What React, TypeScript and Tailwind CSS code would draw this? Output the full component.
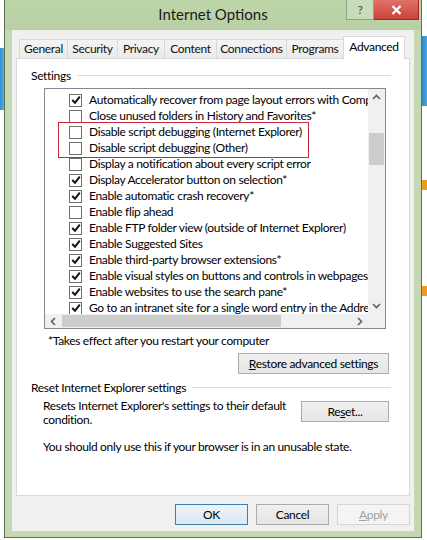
import { Fragment } from 'react';

const settings = [
  { label: 'Automatically recover from page layout errors with Compatibility View', checked: true },
  { label: 'Close unused folders in History and Favorites*', checked: false },
  { label: 'Disable script debugging (Internet Explorer)', checked: false },
  { label: 'Disable script debugging (Other)', checked: false },
  { label: 'Display a notification about every script error', checked: false },
  { label: 'Display Accelerator button on selection*', checked: true },
  { label: 'Enable automatic crash recovery*', checked: true },
  { label: 'Enable flip ahead', checked: false },
  { label: 'Enable FTP folder view (outside of Internet Explorer)', checked: true },
  { label: 'Enable Suggested Sites', checked: true },
  { label: 'Enable third-party browser extensions*', checked: true },
  { label: 'Enable visual styles on buttons and controls in webpages', checked: true },
  { label: 'Enable websites to use the search pane*', checked: true },
  { label: 'Go to an intranet site for a single word entry in the Address bar', checked: true },
];

const tabs = [
  { label: 'General', w: 'w-[48px]' },
  { label: 'Security', w: 'w-[50px]' },
  { label: 'Privacy', w: 'w-[47px]' },
  { label: 'Content', w: 'w-[52px]' },
  { label: 'Connections', w: 'w-[70px]' },
  { label: 'Programs', w: 'w-[57px]' },
];

function CheckBox({ checked }: { checked: boolean }) {
  return (
    <div className="w-[13px] h-[13px] border border-[#707070] bg-white flex items-center justify-center flex-shrink-0">
      {checked && (
        <svg width="10" height="10" viewBox="0 0 10 10">
          <path d="M1.2 5 L4 7.8 L8.8 1.6" fill="none" stroke="#111" strokeWidth="2" />
        </svg>
      )}
    </div>
  );
}

function Chevron({ dir }: { dir: 'up' | 'down' | 'left' | 'right' }) {
  const d = {
    up: 'M1 6 L4.5 2.5 L8 6',
    down: 'M1 3 L4.5 6.5 L8 3',
    left: 'M6 1 L2.5 4.5 L6 8',
    right: 'M3 1 L6.5 4.5 L3 8',
  }[dir];
  return (
    <svg width="9" height="9" viewBox="0 0 9 9">
      <path d={d} fill="none" stroke="#606060" strokeWidth="1.6" />
    </svg>
  );
}

function WinButton({
  children,
  className = '',
  variant = 'normal',
}: {
  children: React.ReactNode;
  className?: string;
  variant?: 'normal' | 'default' | 'disabled';
}) {
  const look =
    variant === 'default'
      ? 'border-[#3c7fb1] bg-[linear-gradient(#ecf4fb,#dde8f2)] text-black'
      : variant === 'disabled'
        ? 'border-[#d5d5d5] bg-[#f4f4f4] text-[#a0a0a0]'
        : 'border-[#acacac] bg-[linear-gradient(#f0f0f0,#e5e5e5)] text-black';
  return (
    <div className={`h-[21px] border flex items-center justify-center text-[12px] ${look} ${className}`}>
      {children}
    </div>
  );
}

export default function App() {
  return (
    <div className="w-[427px] h-[540px] bg-white flex overflow-hidden font-['Lato',sans-serif] text-[12px] tracking-[-0.33px] text-black leading-[16px]">
      {/* page behind the dialog */}
      <div className="w-[4px] flex flex-col flex-shrink-0">
        <div className="h-[48px]" />
        <div className="h-[62px] bg-[linear-gradient(90deg,#2d8fd0,#53b0e6)]" />
      </div>

      {/* dialog window */}
      <div className="w-[418px] h-[538px] flex flex-col flex-shrink-0 border-x border-b border-[#5f7155] bg-[#c4d9b3]">
        {/* title bar */}
        <div className="h-[30px] relative flex items-center justify-center bg-[linear-gradient(#bed5aa,#b8d0a3)]">
          <span className="text-[15px] tracking-normal text-[#1a1a1a] -mt-[2px]">Internet Options</span>
          <div className="absolute top-0 right-[2px] flex">
            <div className="w-[28px] h-[20px] border border-t-0 border-[#8ea581] bg-[#c9dcba] flex items-center justify-center text-[12px] text-[#3d4a36]">
              ?
            </div>
            <div className="w-[45px] h-[20px] border border-t-0 border-l-0 border-[#9b2a22] bg-[linear-gradient(#e0726a,#c8433a)] flex items-center justify-center">
              <svg width="11" height="10" viewBox="0 0 11 10">
                <path d="M1.5 1 L9.5 9 M9.5 1 L1.5 9" stroke="#fff" strokeWidth="2.4" />
              </svg>
            </div>
          </div>
        </div>

        {/* client area */}
        <div className="flex-1 px-[7px] pb-[6px]">
          <div className="h-full bg-[#f0f0f0] flex flex-col px-[4px] pt-[6px]">
            {/* tabs */}
            <div className="h-[22px] flex items-end pl-[3px]">
              {tabs.map((t) => (
                <div
                  key={t.label}
                  className={`${t.w} h-[19px] border border-b-0 border-r-0 border-[#d9d9d9] bg-[linear-gradient(#f3f3f3,#ebebeb)] flex items-center justify-center text-[12px] text-[#111]`}
                >
                  {t.label}
                </div>
              ))}
              <div className="w-[62px] h-[23px] -mb-[1px] border border-b-0 border-[#d9d9d9] bg-white flex justify-center pt-[2px] relative z-10">
                Advanced
              </div>
            </div>

            {/* tab panel */}
            <div className="h-[438px] bg-white border border-[#d9d9d9] flex flex-col">
              <div className="mt-[9px] flex items-center pl-[14px] pr-[18px]">
                <span>Settings</span>
                <div className="flex-1 ml-[6px] h-[2px] border-t border-[#d5dfe5] border-b border-b-white" />
              </div>

              {/* settings list */}
              <div className="ml-[27px] mt-[4px] w-[342px] h-[241px] border border-[#828790] flex flex-col relative">
                <div className="flex flex-1 min-h-0">
                  <div className="flex-1 overflow-hidden pt-[3px]">
                    {settings.map((s) => (
                      <div key={s.label} className="h-[16px] flex items-center pl-[24px] whitespace-nowrap">
                        <CheckBox checked={s.checked} />
                        <span className="ml-[7px]">{s.label}</span>
                      </div>
                    ))}
                  </div>
                  <div className="w-[17px] bg-[#f0f0f0] flex flex-col items-center">
                    <div className="h-[17px] flex items-center justify-center">
                      <Chevron dir="up" />
                    </div>
                    <div className="flex-1 w-full px-[1px] pt-[27px]">
                      <div className="h-[32px] bg-[#cdcdcd]" />
                    </div>
                    <div className="h-[17px] flex items-center justify-center">
                      <Chevron dir="down" />
                    </div>
                  </div>
                </div>
                <div className="h-[14px] flex bg-[#f0f0f0]">
                  <div className="w-[17px] flex items-center justify-center">
                    <Chevron dir="left" />
                  </div>
                  <div className="flex-1 flex py-[1px]">
                    <div className="w-[219px] bg-[#cdcdcd]" />
                  </div>
                  <div className="w-[17px] flex items-center justify-center">
                    <Chevron dir="right" />
                  </div>
                  <div className="w-[17px] bg-[#f0f0f0]" />
                </div>
                {/* red annotation box */}
                <div className="absolute left-[13px] top-[33px] w-[251px] h-[36px] border border-[#c8283c] pointer-events-none" />
              </div>

              <div className="ml-[31px] mt-[4px]">*Takes effect after you restart your computer</div>

              <div className="flex justify-end pr-[20px] mt-[4px]">
                <WinButton className="w-[151px]">
                  <span>
                    <span className="underline">R</span>estore advanced settings
                  </span>
                </WinButton>
              </div>

              <div className="mt-[6px] flex items-center pl-[14px] pr-[18px]">
                <span>Reset Internet Explorer settings</span>
                <div className="flex-1 ml-[6px] h-[2px] border-t border-[#d5dfe5] border-b border-b-white" />
              </div>

              <div className="mt-[3px] flex pl-[26px] pr-[20px]">
                <div className="flex-1 leading-[14px] whitespace-nowrap">
                  Resets Internet Explorer's settings to their default
                  <br />
                  condition.
                </div>
                <WinButton className="w-[88px] h-[20px] mt-[2px]">
                  <span>
                    Re<span className="underline">s</span>et...
                  </span>
                </WinButton>
              </div>

              <div className="ml-[26px] mt-[12px]">You should only use this if your browser is in an unusable state.</div>
            </div>

            {/* dialog buttons */}
            <div className="mt-[8px] flex justify-end gap-[8px]">
              <WinButton className="w-[73px]" variant="default">
                OK
              </WinButton>
              <WinButton className="w-[73px]">Cancel</WinButton>
              <WinButton className="w-[73px]" variant="disabled">
                <Fragment>
                  <span className="underline">A</span>pply
                </Fragment>
              </WinButton>
            </div>
          </div>
        </div>
      </div>

      {/* page behind the dialog, right side */}
      <div className="w-[5px] flex flex-col flex-shrink-0">
        <div className="h-[36px]" />
        <div className="h-[70px] bg-[linear-gradient(90deg,#2a8acb,#4aa8e0)]" />
        <div className="h-[74px]" />
        <div className="h-[10px] bg-[#f39a1e]" />
        <div className="h-[96px]" />
        <div className="h-[10px] bg-[#f39a1e]" />
      </div>
    </div>
  );
}
